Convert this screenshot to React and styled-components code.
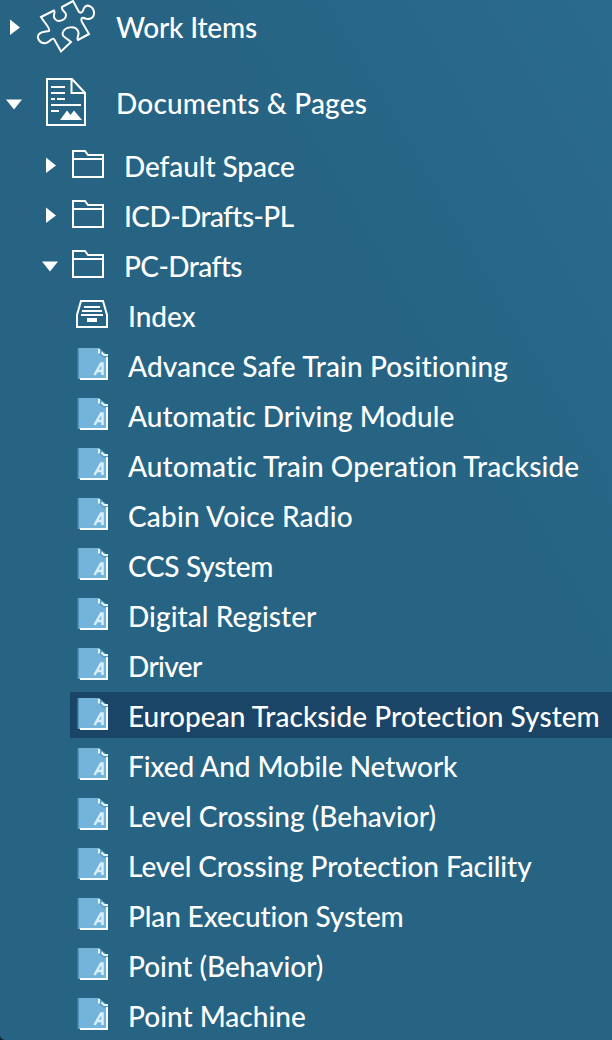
import React from "react";
import styled, { createGlobalStyle } from "styled-components";

const GlobalStyle = createGlobalStyle`
  * { box-sizing: border-box; }
  body { margin: 0; background: #10202c; }
`;

const Sidebar = styled.nav`
  height: 1040px;
  overflow: hidden;
  color: #fff;
  font-family: Lato, "Noto Sans", sans-serif;
  font-size: 28px;
  font-weight: 500;
  border-bottom-left-radius: 5px;
  background: linear-gradient(to bottom left, #2a6a8d 0, #276484 360px, #276484 100%);
`;

const Section = styled.div`
  display: flex;
  align-items: center;
  height: 76px;
  margin-top: ${(p) => (p.$first ? "-11px" : "0")};
  padding-left: 6px;
`;

const Tree = styled.div`
  display: flex;
  flex-direction: column;
  gap: 4px;
  padding-top: 1px;
`;

const FolderRow = styled.div`
  display: flex;
  align-items: center;
  height: 46px;
  padding-left: 42px;
`;

const PageRow = styled.div`
  display: flex;
  align-items: center;
  height: 46px;
  margin-left: 70px;
  padding-left: 6px;
  background: ${(p) => (p.$selected ? "#1a4566" : "transparent")};
`;

const Toggle = styled.svg`
  flex: none;
  width: 16px;
  height: 16px;
  fill: #fff;
`;

const IconSlot = styled.span`
  display: flex;
  flex: none;
  justify-content: center;
  width: ${(p) => p.$width}px;
  margin-left: ${(p) => p.$before || 0}px;
  margin-right: ${(p) => p.$after}px;
  padding-bottom: ${(p) => p.$lift || 0}px;
`;

const Line = styled.svg`
  display: block;
  flex: none;
  fill: none;
  stroke: #fff;
  stroke-width: 2;
`;

const Label = styled.span`
  line-height: 40px;
  white-space: nowrap;
  padding-top: ${(p) => (p.$section ? 0 : 2)}px;
  letter-spacing: ${(p) => p.$tracking || 0}px;
`;

const Arrow = ({ open }) => (
  <Toggle viewBox="0 0 16 16">
    <path d={open ? "M0 4.5H16L8 14.5Z" : "M4 0.5L14 8.5L4 16Z"} />
  </Toggle>
);

const PuzzleIcon = () => (
  <Line width="60" height="54" viewBox="0 0 60 54">
    <path d="M5 17L18 10.500C20 12 16 16 19 19C22 23 30 20 30 15C30 11 25 11 26 7L37 1L43 12C46 14 47 11 48 8C51 3 58 7 58 13C58 19 52 20 48 18C45 17 45 20 46 22L53 34L42 40C40 38 44 35 42 31C39 25 29 27 27 32C25 37 31 38 35 42L25 51.500L18 39C16 37 14 42 10 43C4 44 0 38 3 34C6 31 10 32 13 31C15 29 8 22 5 17Z" />
  </Line>
);

const DocumentIcon = () => (
  <Line width="40" height="48" viewBox="0 0 40 48">
    <path d="M1 1H26L39 15V47H1ZM25.5 1V15H39M5 9H19M5 15H19M5 21H9M11 21H19M5 27H35M5 33H13" />
    <path d="M14 42L21 32.5L24.5 37L28 32.5L36 42Z" fill="#fff" stroke="none" />
  </Line>
);

const FolderIcon = () => (
  <Line width="32" height="28" viewBox="0 0 32 28">
    <path d="M1 27V1H13L16 5H31V27ZM1 9H31" />
  </Line>
);

const DrawerIcon = () => (
  <Line width="32" height="28" viewBox="0 0 32 28">
    <path d="M1 27V15L5 1H27L31 15V27ZM8 7H24M6 11H26M5 15H27" />
    <path d="M11 18H21V22H11Z" fill="#fff" stroke="none" />
  </Line>
);

const PageIcon = () => (
  <svg width="32" height="32" viewBox="0 0 32 32" fill="none">
    <path d="M2 0H23L32 8V31H2Z" fill="#74b4da" />
    <path d="M1.5 0H3V31H1.500Z" fill="#4f91b8" />
    <path d="M23 0L32 8V10H28L23 6Z" fill="#5a9cc3" />
    <path d="M23 1V5.500M25.500 4.500L28 7H32" stroke="#e5f5fc" strokeWidth="2" />
    <path d="M4 31H31V9" stroke="#f5fbff" strokeWidth="2" />
    <path d="M18.500 27L25 15.500H26.500V27M21 23H26.500" stroke="#d9effb" strokeWidth="2.5" />
  </svg>
);

const folders = [
  { name: "Default Space", tracking: -0.08 },
  { name: "ICD-Drafts-PL", tracking: -0.58 },
  { name: "PC-Drafts", tracking: -0.57, open: true },
];

const pages = [
  { name: "Index", tracking: -0.05, index: true },
  { name: "Advance Safe Train Positioning", tracking: 0.11 },
  { name: "Automatic Driving Module", tracking: 0.01 },
  { name: "Automatic Train Operation Trackside", tracking: 0.11 },
  { name: "Cabin Voice Radio", tracking: 0.19 },
  { name: "CCS System", tracking: -0.3 },
  { name: "Digital Register", tracking: 0.06 },
  { name: "Driver", tracking: -0.6 },
  { name: "European Trackside Protection System", tracking: 0.04, selected: true },
  { name: "Fixed And Mobile Network", tracking: -0.08 },
  { name: "Level Crossing (Behavior)", tracking: 0.02 },
  { name: "Level Crossing Protection Facility", tracking: -0.06 },
  { name: "Plan Execution System", tracking: -0.13 },
  { name: "Point (Behavior)", tracking: -0.03 },
  { name: "Point Machine" },
];

export default function App() {
  return (
    <>
      <GlobalStyle />
      <Sidebar>
        <Section $first>
          <Arrow />
          <IconSlot $width={60} $before={14} $after={20}><PuzzleIcon /></IconSlot>
          <Label $section $tracking={-0.2}>Work Items</Label>
        </Section>
        <Section>
          <Arrow open />
          <IconSlot $width={60} $before={14} $after={20} $lift={2}><DocumentIcon /></IconSlot>
          <Label $section $tracking={0.19}>Documents &amp; Pages</Label>
        </Section>
        <Tree>
          {folders.map((f) => (
            <FolderRow key={f.name}>
              <Arrow open={f.open} />
              <IconSlot $width={32} $before={14} $after={20} $lift={2}><FolderIcon /></IconSlot>
              <Label $tracking={f.tracking}>{f.name}</Label>
            </FolderRow>
          ))}
          {pages.map((p) => (
            <PageRow key={p.name} $selected={p.selected}>
              <IconSlot $width={32} $after={20} $lift={2}>{p.index ? <DrawerIcon /> : <PageIcon />}</IconSlot>
              <Label $tracking={p.tracking}>{p.name}</Label>
            </PageRow>
          ))}
        </Tree>
      </Sidebar>
    </>
  );
}
